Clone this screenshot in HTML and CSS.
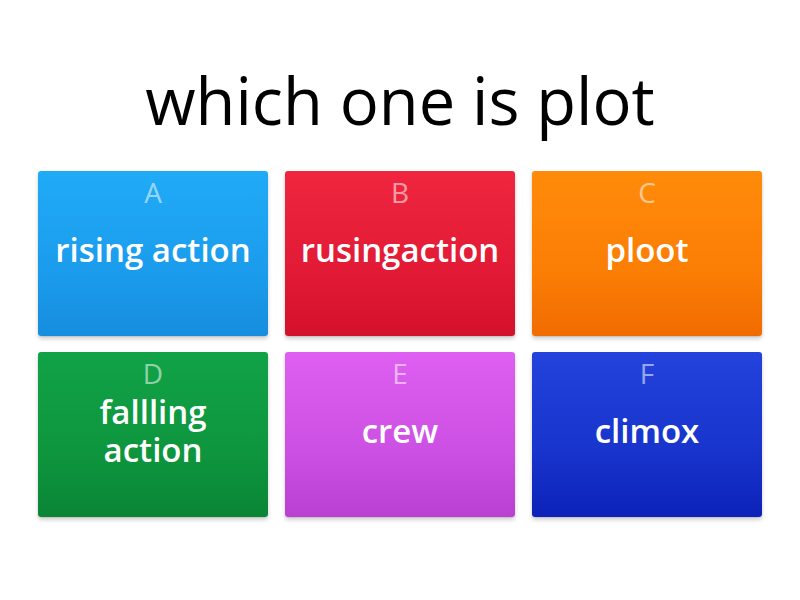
FILE: index.html
```html
<!DOCTYPE html>
<html>
<head>
<meta charset="utf-8">
<link rel="stylesheet" href="styles.css">
</head>
<body>
<div class="page">
  <h1 class="title">which one is plot</h1>
  <div class="grid">
    <div class="card card-a"><div class="letter">A</div><div class="answer"><span>rising action</span></div></div>
    <div class="card card-b"><div class="letter">B</div><div class="answer"><span>rusingaction</span></div></div>
    <div class="card card-c"><div class="letter">C</div><div class="answer"><span>ploot</span></div></div>
    <div class="card card-d"><div class="letter">D</div><div class="answer"><span>fallling<br>action</span></div></div>
    <div class="card card-e"><div class="letter">E</div><div class="answer"><span>crew</span></div></div>
    <div class="card card-f"><div class="letter">F</div><div class="answer"><span>climox</span></div></div>
  </div>
</div>
</body>
</html>
```

FILE: styles.css
```css
html, body {
  margin: 0;
  padding: 0;
  background: #ffffff;
}
.page {
  width: 800px;
  height: 600px;
  font-family: "Open Sans", "Noto Sans", sans-serif;
}
.title {
  margin: 0;
  padding-top: 60px;
  height: 80px;
  line-height: 80px;
  font-size: 65px;
  font-weight: 400;
  color: #000;
  text-align: center;
}
.grid {
  margin: 31px 38px 0 38px;
  display: grid;
  grid-template-columns: repeat(3, 230px);
  grid-template-rows: repeat(2, 165px);
  column-gap: 17px;
  row-gap: 16px;
}
.card {
  border-radius: 3px;
  display: flex;
  flex-direction: column;
  color: #fff;
  box-shadow: 0 3px 4px rgba(0,0,0,0.18), 0 1px 1px rgba(0,0,0,0.08);
}
.letter {
  height: 36px;
  padding-top: 3px;
  line-height: 36px;
  font-size: 28px;
  font-weight: 400;
  text-align: center;
  color: rgba(255,255,255,0.55);
}
.answer {
  flex: 1;
  display: flex;
  align-items: center;
  justify-content: center;
  padding-bottom: 46px;
  text-align: center;
  font-size: 33px;
  line-height: 38px;
  font-weight: 600;
}
.card-a { background: linear-gradient(180deg, #20abf7 0%, #1b9cec 60%, #178ddf 100%); }
.card-b { background: linear-gradient(180deg, #f0263f 0%, #e21a35 60%, #d4112a 100%); }
.card-c { background: linear-gradient(180deg, #ff8b0a 0%, #fb7e05 60%, #f16c00 100%); }
.card-d { background: linear-gradient(180deg, #11a247 0%, #0e963e 60%, #0a8535 100%); }
.card-e { background: linear-gradient(180deg, #de5ff2 0%, #cc50e3 60%, #b840d2 100%); }
.card-f { background: linear-gradient(180deg, #2243dc 0%, #1834cc 60%, #0c22b8 100%); }
```
